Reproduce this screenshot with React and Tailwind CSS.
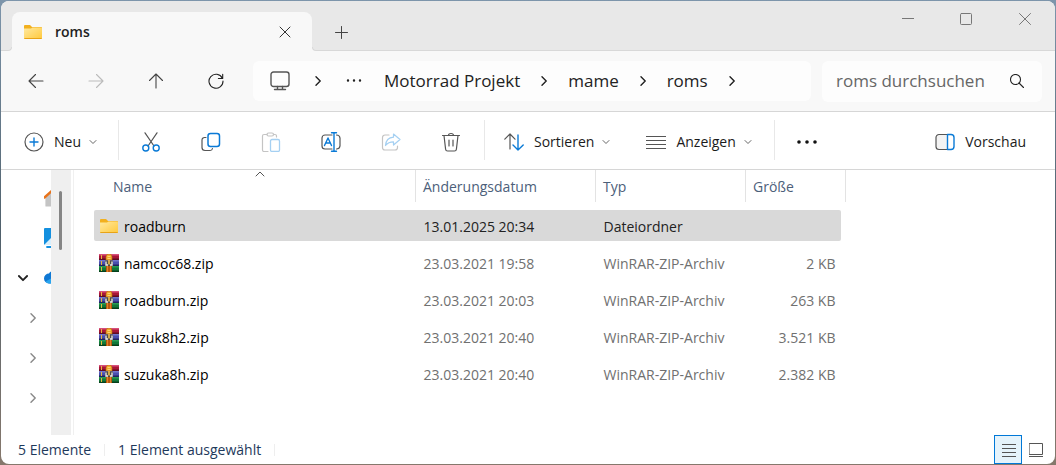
import React from 'react';

const files = [
  { name: 'roadburn', date: '13.01.2025 20:34', type: 'Dateiordner', size: '', folder: true, selected: true },
  { name: 'namcoc68.zip', date: '23.03.2021 19:58', type: 'WinRAR-ZIP-Archiv', size: '2 KB' },
  { name: 'roadburn.zip', date: '23.03.2021 20:03', type: 'WinRAR-ZIP-Archiv', size: '263 KB' },
  { name: 'suzuk8h2.zip', date: '23.03.2021 20:40', type: 'WinRAR-ZIP-Archiv', size: '3.521 KB' },
  { name: 'suzuka8h.zip', date: '23.03.2021 20:40', type: 'WinRAR-ZIP-Archiv', size: '2.382 KB' },
];

// Line icon on a 20x20 grid, grey by default
const Icon = ({ children, className = 'text-[#555]', size = 20, width = 1.2 }) => (
  <svg
    width={size}
    height={size}
    viewBox={`0 0 ${size} ${size}`}
    fill="none"
    stroke="currentColor"
    strokeWidth={width}
    strokeLinecap="round"
    strokeLinejoin="round"
    className={`shrink-0 ${className}`}
    aria-hidden="true"
  >
    {children}
  </svg>
);

const ChevronRight = ({ className = 'text-[#222]' }) => (
  <Icon size={10} width={1.4} className={className}><path d="M3 .8 7.2 5 3 9.2" /></Icon>
);

const ChevronDown = () => (
  <Icon size={8} width={1} className="text-[#666]"><path d="M1 2.5 4 5.500 7 2.500" /></Icon>
);

const FolderIcon = () => (
  <svg width="20" height="18" viewBox="0 0 20 18" className="shrink-0" aria-hidden="true">
    <defs>
      <linearGradient id="folder" x1="0" y1="0" x2="1" y2="1">
        <stop offset="0" stopColor="#ffe9a0" />
        <stop offset="1" stopColor="#ffc93c" />
      </linearGradient>
    </defs>
    <path d="M1 3a1 1 0 0 1 1-1h5l2 2h9a1 1 0 0 1 1 1v8H1z" fill="#f2b01e" />
    <path d="M1 5.500h7L9.500 4.500H18a1 1 0 0 1 1 1V15a1 1 0 0 1-1 1H2a1 1 0 0 1-1-1z" fill="url(#folder)" />
    <path d="M1.300 15.500h17.400" stroke="#e8a317" strokeWidth="1" />
  </svg>
);

// Stack of three books held by a belt
const ArchiveIcon = () => (
  <svg width="20" height="18" viewBox="0 0 20 18" className="shrink-0" aria-hidden="true">
    <rect width="20" height="6" fill="#a81638" />
    <rect width="20" height="1.500" fill="#d8507a" />
    <rect y="4.500" width="20" height="1.500" fill="#5e0c22" />
    <rect y="6" width="20" height="6" fill="#4a4fae" />
    <rect y="6" width="20" height="1.500" fill="#7276cc" />
    <rect y="10.500" width="20" height="1.500" fill="#20235f" />
    <rect y="12" width="20" height="6" fill="#12783a" />
    <rect y="12" width="20" height="1.500" fill="#2b9c52" />
    <rect y="16.500" width="20" height="1.500" fill="#06401a" />
    <path d="M2.500 1v4M2.500 7v4M2.500 13v4" stroke="#e5b93c" />
    <rect x="7" y="11" width="6" height="7" fill="#b9560f" />
    <path d="M8.500 12v6M11.500 12v6" stroke="#e08428" />
    <path d="M7 6V3a3 3 0 0 1 6 0v3z" fill="#f0a82c" stroke="#b86f10" strokeWidth=".6" />
    <path d="M8.500 2.500h3M8.500 4.500h3" stroke="#ffdf80" strokeWidth=".8" />
    <path d="M6 6.500h8v5.500H6z" fill="#4d4a48" />
    <path d="M7 7.500V11h2M13 7.500V11h-2" fill="none" stroke="#eee" strokeWidth="1.300" />
    <path d="M10 6v4.500" stroke="#f2c14a" strokeWidth="1.600" />
  </svg>
);

const IconButton = ({ label, disabled, children }) => (
  <button type="button" aria-label={label} disabled={disabled} className="flex h-10 w-[60px] shrink-0 items-center justify-center">
    {children}
  </button>
);

const Separator = () => <span className="h-10 w-px shrink-0 bg-[#e8e8e8]" />;

const TitleBar = () => (
  <div className="flex h-[50px] items-end border-b border-[#d8d8d8] bg-[#e8e8e8] pl-[11px]">
    <div className="relative -mb-px flex h-[39px] w-[300px] shrink-0 items-center rounded-t-lg bg-[#f8f8f8] pr-[15px] pl-[11px]">
      <span className="absolute bottom-0 -left-1 size-1 bg-[#f8f8f8]"><span className="block size-1 rounded-br border-r border-b border-[#d8d8d8] bg-[#e8e8e8]" /></span>
      <span className="absolute -right-1 bottom-0 size-1 bg-[#f8f8f8]"><span className="block size-1 rounded-bl border-b border-l border-[#d8d8d8] bg-[#e8e8e8]" /></span>
      <FolderIcon />
      <span className="ml-3 flex-1 text-sm font-semibold text-[#222]">roms</span>
      <button type="button" aria-label="Tab schließen" className="flex size-6 items-center justify-center">
        <Icon size={12} width={1} className="text-[#333]"><path d="m1 1 10 10M11 1 1 11" /></Icon>
      </button>
    </div>
    <button type="button" aria-label="Neuer Tab" className="mb-1.5 ml-[17px] flex size-6 items-center justify-center">
      <Icon size={13} width={1} className="text-[#444]"><path d="M6.500.5v12M.5 6.500h12" /></Icon>
    </button>
    <div className="ml-auto flex self-start">
      <button type="button" aria-label="Minimieren" className="flex h-9 w-[58px] items-center justify-center">
        <Icon size={12} width={1} className="text-[#777]"><path d="M0 5.500h12" /></Icon>
      </button>
      <button type="button" aria-label="Maximieren" className="flex h-9 w-[58px] items-center justify-center">
        <Icon size={12} width={1} className="text-[#777]"><rect x=".5" y=".5" width="11" height="11" rx="1" /></Icon>
      </button>
      <button type="button" aria-label="Schließen" className="flex h-9 w-[60px] items-center justify-center">
        <Icon size={12} width={1} className="text-[#777]"><path d="m.5.5 11 11M11.500.5l-11 11" /></Icon>
      </button>
    </div>
  </div>
);

const Crumb = ({ children }) => (
  <>
    <button type="button" className="text-[17px] text-[#222]">{children}</button>
    <span className="flex w-12 justify-center"><ChevronRight /></span>
  </>
);

const NavBar = () => (
  <div className="flex h-[60px] items-center gap-[11px] bg-[#f8f8f8] pr-[13px] pl-[5px]">
    <nav aria-label="Verlauf" className="flex w-[236px] shrink-0">
      <IconButton label="Zurück"><Icon size={16} width={1.1} className="text-[#444]"><path d="M15 8H1M7.500 1.500 1 8l6.500 6.500" /></Icon></IconButton>
      <IconButton label="Vorwärts" disabled><Icon size={16} width={1.1} className="text-[#bbb]"><path d="M1 8h14M8.500 1.500 15 8l-6.500 6.500" /></Icon></IconButton>
      <IconButton label="Nach oben"><Icon size={16} width={1.1} className="text-[#444]"><path d="M8 15V1M1.500 7.500 8 1l6.500 6.500" /></Icon></IconButton>
      <IconButton label="Aktualisieren"><Icon size={16} width={1.1} className="text-[#222]"><path d="M14.300 5.200A7 7 0 1 0 15 8M14.700 1.200v4.300h-4.300" /></Icon></IconButton>
    </nav>
    <nav aria-label="Pfad" className="flex h-10 flex-1 items-center rounded-md bg-[#fdfdfd] pl-[17px]">
      <button type="button" aria-label="Dieser PC">
        <Icon width={1.4}><rect x="1" y="1" width="18" height="14.500" rx="2.500" /><path d="M7.500 15.500v2.500M12.500 15.500v2.500M4.500 18.500h11" /></Icon>
      </button>
      <span className="flex w-[56px] justify-center"><ChevronRight /></span>
      <button type="button" aria-label="Weitere Ordner" className="mr-[22px]">
        <Icon size={16} className="text-[#222]"><path d="M2 7.500h.01M8 7.500h.01M14 7.500h.01" strokeWidth="2.400" /></Icon>
      </button>
      <Crumb>Motorrad Projekt</Crumb>
      <Crumb>mame</Crumb>
      <Crumb>roms</Crumb>
    </nav>
    <label className="flex h-[41px] w-[220px] shrink-0 items-center rounded-md bg-[#fdfdfd] pr-[18px] pl-3.5">
      <input type="text" aria-label="roms durchsuchen" placeholder="roms durchsuchen" className="w-0 flex-1 text-[17px] text-[#222] outline-none placeholder:text-[#666]" />
      <Icon size={14} width={1.1} className="text-[#222]"><circle cx="5.500" cy="5.500" r="5" /><path d="m9 9 4.500 4.500" /></Icon>
    </label>
  </div>
);

const Toolbar = () => (
  <div className="flex h-[59px] items-center border-y border-[#d6d6d6] bg-white pt-[3px] pb-1 text-sm text-[#1b1b1b]">
    <button type="button" className="flex w-[117px] shrink-0 items-center pt-1 pl-[23px]">
      <Icon><circle cx="10" cy="10" r="9" /><path d="M10 6v8M6 10h8" stroke="#0a7ad6" strokeWidth="1.400" /></Icon>
      <span className="mr-2 ml-2.5">Neu</span>
      <ChevronDown />
    </button>
    <Separator />
    <div className="flex w-[365px] shrink-0 pt-1 pl-0.5">
      <IconButton label="Ausschneiden">
        <Icon><path d="M4 .8 13 14M16 .8 7 14" /><g stroke="#0a7ad6" strokeWidth="1.400"><circle cx="4.800" cy="16" r="3" /><circle cx="15.200" cy="16" r="3" /></g></Icon>
      </IconButton>
      <IconButton label="Kopieren">
        <Icon><path d="M5 5.500H3.500A2.500 2.500 0 0 0 1 8v7.500A3 3 0 0 0 4 18.500h5a2.500 2.500 0 0 0 2.500-2" /><rect x="7" y="1.500" width="11.500" height="13" rx="2.500" stroke="#0a7ad6" strokeWidth="1.500" /></Icon>
      </IconButton>
      <IconButton label="Einfügen" disabled>
        <Icon className="text-[#c4c4c4]"><path d="M6 2.500H3A1.500 1.500 0 0 0 1.500 4v14A1.500 1.500 0 0 0 3 19.500h4M12.500 2.500H14A1.500 1.500 0 0 1 15.500 4v1" /><rect x="6" y="1" width="6.500" height="3" rx="1.500" /><rect x="9.500" y="7.500" width="9" height="12" rx="1.500" stroke="#a5d0f2" strokeWidth="1.300" /></Icon>
      </IconButton>
      <IconButton label="Umbenennen">
        <Icon><path d="M11 3H4a3 3 0 0 0-3 3v8a3 3 0 0 0 3 3h7M15.500 3a3.500 3.500 0 0 1 3.500 3v8a3.500 3.500 0 0 1-3.500 3" /><path d="M10.500.8h5M10.500 19.200h5M13 .8v18.400M3.500 13.500 7 6l3.500 7.500M4.800 11h4.400" stroke="#0a7ad6" strokeWidth="1.400" /></Icon>
      </IconButton>
      <IconButton label="Freigeben" disabled>
        <Icon className="text-[#c4c4c4]"><path d="M8 3H4a2.500 2.500 0 0 0-2.500 2.500v10A2.500 2.500 0 0 0 4 18h10a2.500 2.500 0 0 0 2.500-2.500V14" /><path d="M12.500 2 19 7.500 12.500 13v-3.200C9 9.800 6.500 10.800 4.500 13.500c.3-4.500 3-7.800 8-8.300z" stroke="#a5d0f2" /></Icon>
      </IconButton>
      <IconButton label="Löschen">
        <Icon><path d="M1.500 3.500h17M7.500 3.500a2.500 2 0 0 1 5 0M3 3.500l1.600 13.700A2 2 0 0 0 6.600 19h6.800a2 2 0 0 0 2-1.800L17 3.500M8 8v6M12 8v6" /></Icon>
      </IconButton>
    </div>
    <Separator />
    <button type="button" className="ml-[19px] flex shrink-0 items-center pt-1">
      <Icon><path d="M6 17V2M.8 7.200 6 2l5 5.200" /><path d="M14 3v15M9 13l5 5 5.200-5" stroke="#0a7ad6" strokeWidth="1.400" /></Icon>
      <span className="mr-2 ml-2.5">Sortieren</span>
      <ChevronDown />
    </button>
    <button type="button" className="ml-9 flex shrink-0 items-center pt-1">
      <Icon width={1}><path d="M0 4.500h20M0 8.500h20M0 12.500h20M0 16.500h20" /></Icon>
      <span className="mr-2 ml-2.5">Anzeigen</span>
      <ChevronDown />
    </button>
    <span className="mr-0.5 ml-[22px] flex"><Separator /></span>
    <button type="button" aria-label="Mehr anzeigen" className="flex h-10 w-[60px] shrink-0 items-center justify-center pt-1">
      <Icon className="text-[#111]"><path d="M2 10h.01M10 10h.01M18 10h.01" strokeWidth="3.600" /></Icon>
    </button>
    <button type="button" className="mr-[29px] ml-auto flex shrink-0 items-center pt-1">
      <Icon><path d="M12 2.500H4A3 3 0 0 0 1 5.500v9a3 3 0 0 0 3 3h8" fill="#f3f3f3" /><path d="M12.500 2.500H16a3 3 0 0 1 3 3v9a3 3 0 0 1-3 3h-3.500z" stroke="#0a7ad6" strokeWidth="1.400" /></Icon>
      <span className="ml-2.5">Vorschau</span>
    </button>
  </div>
);

// Narrow navigation pane; its icons are cut off by the scrollbar
const Sidebar = () => (
  <aside className="flex w-[73px] shrink-0 border-r border-[#f0f0f0]">
    <ul className="flex w-[50px] flex-col overflow-hidden pt-2">
      <li className="flex h-10 items-center pl-[43px]">
        <Icon className="text-[#c4c4c4]"><path d="M2 9v9h16V9L10 2z" fill="#c4c4c4" /><path d="M.5 9.500 10 1l9 8.500" stroke="#e8731a" strokeWidth="2.400" /></Icon>
      </li>
      <li className="flex h-10 items-center pl-[43px]">
        <Icon className="text-[#1490df]"><rect width="20" height="17" rx="1" fill="#1490df" stroke="none" /><path d="m0 17 8-8 12 8z" fill="#d8effc" stroke="none" /><path d="M3 19h12" strokeWidth="1.800" /></Icon>
      </li>
      <li className="flex h-10 items-center pl-[17px]">
        <Icon size={10} width={1.8} className="mr-4 text-[#222]"><path d="M.9 3 5 7.200 9.100 3" /></Icon>
        <Icon className="text-[#1490df]"><path d="M5 15.500a5 5 0 0 1 0-10 6 6 0 0 1 10 0 5 5 0 0 1 0 10z" fill="#0f78d4" stroke="none" /><path d="M1.500 13.500 8 10v5.500H5a5 5 0 0 1-3.500-2z" fill="#2aa5ee" stroke="none" /></Icon>
      </li>
      <li className="flex h-10 items-center pl-[27px]"><ChevronRight className="text-[#888]" /></li>
      <li className="flex h-10 items-center pl-[27px]"><ChevronRight className="text-[#888]" /></li>
      <li className="flex h-10 items-center pl-[27px]"><ChevronRight className="text-[#888]" /></li>
    </ul>
    <div className="w-5 bg-[#efefef] pt-[21px] pl-2">
      <div className="h-[59px] w-[3px] rounded-full bg-[#858585]" />
    </div>
  </aside>
);

const FileTable = () => (
  <table className="ml-5 w-[752px] table-fixed self-start text-left text-sm">
    <thead>
      <tr className="h-8 text-[#4c607a]">
        <th scope="col" className="relative border-r border-[#e3e3e3] pt-0.5 pl-[19px] font-normal">
          Name
          <span className="absolute top-0 right-0 left-[11px] flex justify-center">
            <Icon size={10} width={1} className="text-[#555]"><path d="M1 6 5 2l4 4" /></Icon>
          </span>
        </th>
        <th scope="col" className="w-[180px] border-r border-[#e3e3e3] pt-0.5 pl-[7px] font-normal">Änderungsdatum</th>
        <th scope="col" className="w-[150px] border-r border-[#e3e3e3] pt-0.5 pl-[7px] font-normal">Typ</th>
        <th scope="col" className="w-[100px] border-r border-[#e3e3e3] pt-0.5 pl-[7px] font-normal">Größe</th>
      </tr>
    </thead>
    <tbody className="before:block before:h-[5px]">
      {files.map(file => {
        const fill = file.selected ? 'bg-[#d9d9d9] text-[#222]' : 'text-[#707070]';
        return (
          <tr key={file.name} className="h-[37px]">
            <td>
              <div className={`flex h-[31px] items-center gap-[5px] rounded-l-xs pl-[5px] ${fill}`}>
                {file.folder ? <FolderIcon /> : <ArchiveIcon />}
                <span className="pt-0.5 text-black">{file.name}</span>
              </div>
            </td>
            <td><div className={`flex h-[31px] items-center pt-0.5 pl-2 ${fill}`}>{file.date}</div></td>
            <td><div className={`flex h-[31px] items-center pt-0.5 pl-2 whitespace-nowrap ${fill}`}>{file.type}</div></td>
            <td className="pr-[5px]"><div className={`flex h-[31px] items-center justify-end rounded-r-xs pt-0.5 pr-[5px] ${fill}`}>{file.size}</div></td>
          </tr>
        );
      })}
    </tbody>
  </table>
);

const StatusBar = () => (
  <footer className="flex h-[29px] items-center pl-[17px] text-sm text-[#1e395b]">
    <span>5 Elemente</span>
    <span className="mx-[13px] h-3 w-px bg-[#eee]" />
    <span>1 Element ausgewählt</span>
    <span className="mx-[13px] h-3 w-px bg-[#eee]" />
    <button type="button" aria-label="Details" className="ml-auto flex h-[29px] w-7 items-center justify-center border border-[#0078d7] bg-[#e5f3fb] pl-0.5">
      <Icon size={14} width={1}><path d="M0 1.500h14M0 5.500h14M0 9.500h14M0 13.500h14" /></Icon>
    </button>
    <button type="button" aria-label="Große Symbole" className="mr-3 ml-[7px]">
      <Icon size={14} width={1}><path d="M.5.5h13v11H.5zM0 13.500h14" /></Icon>
    </button>
  </footer>
);

const App = () => (
  <div className="flex min-h-screen bg-linear-to-b from-[#7d95ab] via-[#4f606b] to-[#86786c] p-px font-['Open_Sans','Noto_Sans',sans-serif]">
    <div className="flex min-w-0 flex-1 flex-col overflow-hidden rounded-lg bg-white">
      <TitleBar />
      <NavBar />
      <Toolbar />
      <main className="flex flex-1">
        <Sidebar />
        <FileTable />
      </main>
      <StatusBar />
    </div>
  </div>
);

export default App;
